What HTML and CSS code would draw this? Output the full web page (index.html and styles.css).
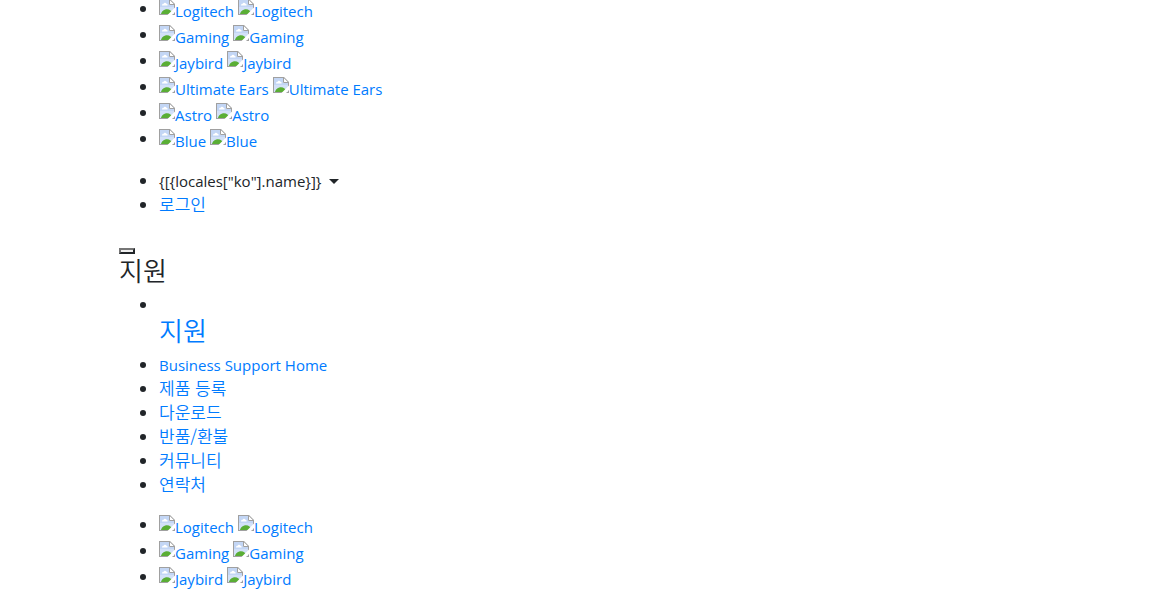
FILE: index.html
```html
<!DOCTYPE html>
<html lang="ko">
<head>
<meta charset="utf-8">
<title>지원</title>
<link rel="stylesheet" href="styles.css">
</head>
<body>
<svg class="sprite" aria-hidden="true">
  <symbol id="pic" viewBox="0 0 16 16">
    <path d="M0 0h11l5 5v11H0z" fill="#a0a0a0"/>
    <path d="M1 1h9.500L15 5.500V15H1z" fill="#fff"/>
    <path d="M1 1h9v5h5v9H1z" fill="#c3d6f5"/>
    <path d="M1 8h14v7H1z" fill="#d3e1f8"/>
    <path d="M3 6.500c0-1.500 1-2 1.700-1.700C5 3.300 7 3.300 7.500 4.800 8.500 4.800 9 6 8.500 6.500z" fill="#fff"/>
    <path d="M2 15c.5-2.500 3-4.700 6-4.700 2.500 0 5 2 5.500 4.700z" fill="#5aae35"/>
    <path d="M10.500 1v4.500H15" fill="#fff" stroke="#a0a0a0"/>
    <path d="M8.500 16 16 8.500V13l-3 3z" fill="#fff"/>
    <path d="M14 16l2-2v2z" fill="#a0a0a0"/>
  </symbol>
</svg>
<div class="container">
  <ul class="list brands">
    <li><a href="#"><span class="brand"><svg class="pic"><use href="#pic"/></svg>Logitech</span><span class="brand"><svg class="pic"><use href="#pic"/></svg>Logitech</span></a></li>
    <li><a href="#"><span class="brand"><svg class="pic"><use href="#pic"/></svg>Gaming</span><span class="brand"><svg class="pic"><use href="#pic"/></svg>Gaming</span></a></li>
    <li><a href="#"><span class="brand"><svg class="pic"><use href="#pic"/></svg>Jaybird</span><span class="brand"><svg class="pic"><use href="#pic"/></svg>Jaybird</span></a></li>
    <li><a href="#"><span class="brand"><svg class="pic"><use href="#pic"/></svg>Ultimate Ears</span><span class="brand"><svg class="pic"><use href="#pic"/></svg>Ultimate Ears</span></a></li>
    <li><a href="#"><span class="brand"><svg class="pic"><use href="#pic"/></svg>Astro</span><span class="brand"><svg class="pic"><use href="#pic"/></svg>Astro</span></a></li>
    <li><a href="#"><span class="brand"><svg class="pic"><use href="#pic"/></svg>Blue</span><span class="brand"><svg class="pic"><use href="#pic"/></svg>Blue</span></a></li>
  </ul>
  <ul class="list links">
    <li><button type="button" class="locale">{[{locales["ko"].name}]}</button></li>
    <li><a class="ko" href="#">로그인</a></li>
  </ul>
  <div class="bar"><button type="button" class="toggler" aria-label="메뉴"></button></div>
  <h4 class="title">지원</h4>
  <ul class="list links">
    <li class="lead">&nbsp;<h4 class="title"><a href="#">지원</a></h4></li>
    <li><a href="#">Business Support Home</a></li>
    <li><a class="ko" href="#">제품 등록</a></li>
    <li><a class="ko" href="#">다운로드</a></li>
    <li><a class="ko" href="#">반품/환불</a></li>
    <li><a class="ko" href="#">커뮤니티</a></li>
    <li><a class="ko" href="#">연락처</a></li>
  </ul>
  <ul class="list brands">
    <li><a href="#"><span class="brand"><svg class="pic"><use href="#pic"/></svg>Logitech</span><span class="brand"><svg class="pic"><use href="#pic"/></svg>Logitech</span></a></li>
    <li><a href="#"><span class="brand"><svg class="pic"><use href="#pic"/></svg>Gaming</span><span class="brand"><svg class="pic"><use href="#pic"/></svg>Gaming</span></a></li>
    <li><a href="#"><span class="brand"><svg class="pic"><use href="#pic"/></svg>Jaybird</span><span class="brand"><svg class="pic"><use href="#pic"/></svg>Jaybird</span></a></li>
  </ul>
</div>
</body>
</html>
```
FILE: styles.css
```css
* { box-sizing: border-box; }
body {
  margin: 0;
  background: #fff;
  color: #212529;
  font-family: "Open Sans", "Noto Sans CJK KR", sans-serif;
  font-size: 15px;
  line-height: 24px;
}
a { color: #007bff; text-decoration: none; }
.sprite { display: none; }
.container {
  max-width: 960px;
  margin: -3px auto 0;
  padding: 0 16px;
}
.list { margin: 0; padding-left: 40px; }
.list li::marker { font-size: 18px; }
.links { padding-top: 15px; padding-bottom: 17px; }
.links li { height: 24px; }
.links .lead { height: 60px; }
.bar + .title + .links { padding-top: 0; }
.brands li { height: 26px; line-height: 23px; }
.brands a {
  display: inline-flex;
  gap: 4px;
  height: 26px;
  line-height: 26px;
  vertical-align: top;
}
.brand { display: inline-flex; }
.pic { width: 16px; height: 16px; margin-top: 1px; }
.locale {
  display: inline-flex;
  align-items: center;
  gap: 8px;
  padding: 0;
  border: 0;
  background: none;
  color: inherit;
  font: inherit;
}
.locale::after {
  content: "";
  border: 5px solid transparent;
  border-top-color: #212529;
  border-bottom: 0;
}
.ko, .title { font-family: "Noto Sans CJK KR", sans-serif; }
.ko { font-size: 17px; line-height: 20px; font-weight: 350; }
.bar { display: flex; height: 24px; padding-top: 15px; }
.toggler {
  width: 16px;
  height: 6px;
  padding: 0;
  border: 2px solid;
  border-color: #767676 #212529 #212529 #767676;
  background: #efefef;
}
.title { margin: 0 0 9px; font-size: 26px; line-height: 26px; font-weight: 350; }
```
